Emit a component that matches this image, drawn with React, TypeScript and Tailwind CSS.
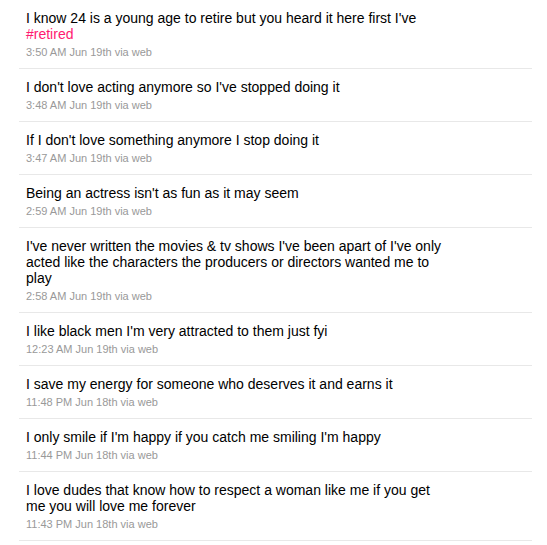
const tweets: { text: React.ReactNode; meta: string }[] = [
  {
    text: (
      <>
        I know 24 is a young age to retire but you heard it here first I've{" "}
        <a className="text-[#ff1a70]">#retired</a>
      </>
    ),
    meta: "3:50 AM Jun 19th via web",
  },
  { text: "I don't love acting anymore so I've stopped doing it", meta: "3:48 AM Jun 19th via web" },
  { text: "If I don't love something anymore I stop doing it", meta: "3:47 AM Jun 19th via web" },
  { text: "Being an actress isn't as fun as it may seem", meta: "2:59 AM Jun 19th via web" },
  {
    text: "I've never written the movies & tv shows I've been apart of I've only acted like the characters the producers or directors wanted me to play",
    meta: "2:58 AM Jun 19th via web",
  },
  { text: "I like black men I'm very attracted to them just fyi", meta: "12:23 AM Jun 19th via web" },
  { text: "I save my energy for someone who deserves it and earns it", meta: "11:48 PM Jun 18th via web" },
  { text: "I only smile if I'm happy if you catch me smiling I'm happy", meta: "11:44 PM Jun 18th via web" },
  {
    text: "I love dudes that know how to respect a woman like me if you get me you will love me forever",
    meta: "11:43 PM Jun 18th via web",
  },
];

export default function App() {
  return (
    <div className="min-h-[545px] bg-white font-['Liberation_Sans',Arial,sans-serif]">
      <ol className="ml-[19px] w-[513px]">
        {tweets.map((t, i) => (
          <li key={i} className="border-b border-[#e8e8e8] pl-[7px] pt-[10px] pb-[9px]">
            <p className="w-[425px] text-[14px] leading-[16px] text-black">{t.text}</p>
            <p className="mt-[3px] text-[11px] leading-[14px] text-[#999999]">{t.meta}</p>
          </li>
        ))}
      </ol>
    </div>
  );
}
